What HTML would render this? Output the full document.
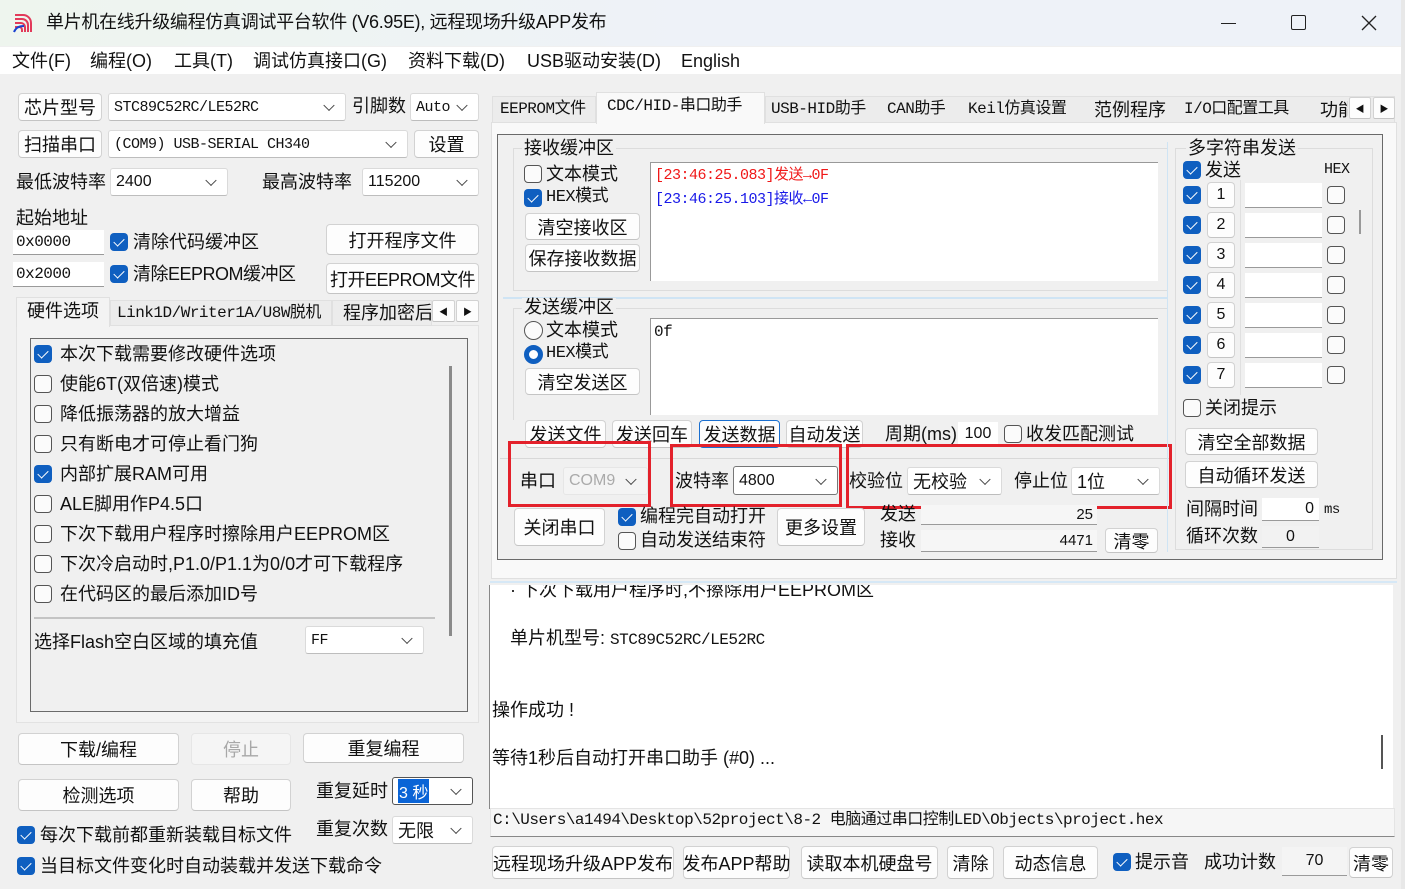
<!DOCTYPE html>
<html><head><meta charset="utf-8"><style>
*{box-sizing:border-box;margin:0;padding:0}
body{width:1405px;height:889px;overflow:hidden;background:#f0f0f0;position:relative;font-family:"Liberation Sans","Noto Sans CJK SC",sans-serif;font-size:18px;color:#111}
.a{position:absolute;white-space:nowrap}
.t{position:absolute;white-space:nowrap;line-height:1}
.b{position:absolute;background:#fdfdfd;border:1px solid #d2d2d2;border-bottom-color:#c4c4c4;border-radius:4px;display:flex;align-items:center;justify-content:center;white-space:nowrap;font-size:18px}
.cb{position:absolute;background:#fff;border:1px solid #dadada;border-bottom-color:#bdbdbd;border-radius:3px;display:flex;align-items:center;padding-left:5px;font-size:16px;white-space:nowrap}
.cb::after{content:"";position:absolute;right:12px;top:50%;width:7px;height:7px;border-right:1.3px solid #444;border-bottom:1.3px solid #444;transform:translateY(-70%) rotate(45deg)}
.m{font-family:"Liberation Mono","Noto Sans CJK SC",monospace;font-size:15px;letter-spacing:-0.5px}
.ck{position:absolute;width:18px;height:18px;border-radius:4px;background:#0f5fc0}
.ck::after{content:"";position:absolute;left:6px;top:3px;width:5px;height:9px;border-right:1.6px solid #fff;border-bottom:1.6px solid #fff;transform:rotate(45deg)}
.uc{position:absolute;width:18px;height:18px;border-radius:4px;border:1.5px solid #555;background:#fbfbfb}
.in{position:absolute;background:#fff;border-bottom:1px solid #9a9a9a;font-size:16px;display:flex;align-items:center}
.red{position:absolute;border:3px solid #e3212b}
</style></head><body>
<!-- title bar -->
<div class="a" style="left:0;top:0;width:1405px;height:46px;background:linear-gradient(90deg,#eef5ee,#eef2f8 50%,#eef2f8)"></div>
<svg class="a" style="left:13px;top:12px" width="24" height="22" viewBox="0 0 24 22">
<path d="M2 3h8a8 8 0 0 1 8 8v9M2 7h7a6 6 0 0 1 6 6v7M2 11h6a4 4 0 0 1 4 4v5M2 15h4a3 3 0 0 1 3 3v2" stroke="#e23a5a" stroke-width="2" fill="none"/>
<path d="M1 20c2-5 6-6 10-6" stroke="#1840d0" stroke-width="2" fill="none"/></svg>
<div class="t" style="left:46px;top:13px;font-size:18px;letter-spacing:-0.3px">单片机在线升级编程仿真调试平台软件 (V6.95E), 远程现场升级APP发布</div>
<div class="a" style="left:1221px;top:23px;width:15px;height:1px;background:#222"></div>
<div class="a" style="left:1291px;top:15px;width:15px;height:15px;border:1.3px solid #222;border-radius:2px"></div>
<svg class="a" style="left:1361px;top:15px" width="16" height="16"><path d="M1 1L15 15M15 1L1 15" stroke="#222" stroke-width="1.3"/></svg>
<!-- menu -->
<div class="a" style="left:0;top:47px;width:1405px;height:27px;background:#fff"></div>
<div class="t" style="left:12px;top:52px">文件(F)</div>
<div class="t" style="left:90px;top:52px">编程(O)</div>
<div class="t" style="left:174px;top:52px">工具(T)</div>
<div class="t" style="left:253px;top:52px">调试仿真接口(G)</div>
<div class="t" style="left:408px;top:52px">资料下载(D)</div>
<div class="t" style="left:527px;top:52px">USB驱动安装(D)</div>
<div class="t" style="left:681px;top:52px">English</div>

<!-- left top -->
<div class="b" style="left:18px;top:93px;width:84px;height:28px">芯片型号</div>
<div class="cb m" style="left:108px;top:93px;width:238px;height:28px">STC89C52RC/LE52RC</div>
<div class="t" style="left:352px;top:97px">引脚数</div>
<div class="cb m" style="left:410px;top:93px;width:69px;height:28px">Auto</div>
<div class="b" style="left:18px;top:130px;width:84px;height:28px">扫描串口</div>
<div class="cb m" style="left:108px;top:130px;width:300px;height:28px">(COM9) USB-SERIAL CH340</div>
<div class="b" style="left:414px;top:130px;width:65px;height:28px">设置</div>
<div class="t" style="left:16px;top:173px">最低波特率</div>
<div class="cb" style="left:110px;top:168px;width:118px;height:28px">2400</div>
<div class="t" style="left:262px;top:173px">最高波特率</div>
<div class="cb" style="left:362px;top:168px;width:117px;height:28px">115200</div>
<div class="t" style="left:16px;top:209px">起始地址</div>
<div class="in m" style="left:13px;top:230px;width:91px;height:25px;padding-left:3px">0x0000</div>
<div class="ck" style="left:110px;top:233px"></div><div class="t" style="left:133px;top:233px">清除代码缓冲区</div>
<div class="b" style="left:326px;top:224px;width:153px;height:31px">打开程序文件</div>
<div class="in m" style="left:13px;top:262px;width:91px;height:25px;padding-left:3px">0x2000</div>
<div class="ck" style="left:110px;top:265px"></div><div class="t" style="left:133px;top:265px;letter-spacing:-0.5px">清除EEPROM缓冲区</div>
<div class="b" style="left:326px;top:263px;width:153px;height:31px;letter-spacing:-0.5px">打开EEPROM文件</div>
<!-- left tabs -->
<div class="a" style="left:16px;top:325px;width:463px;height:398px;background:#f3f3f3;border:1px solid #e2e2e2"></div>
<div class="a" style="left:16px;top:297px;width:94px;height:30px;background:#f3f3f3;border:1px solid #e0e0e0;border-bottom:none"></div>
<div class="t" style="left:27px;top:302px">硬件选项</div>
<div class="a" style="left:110px;top:300px;width:222px;height:26px;background:#ececec;border:1px solid #e0e0e0"></div>
<div class="t m" style="left:117px;top:305px;font-size:16px">Link1D/Writer1A/U8W脱机</div>
<div class="a" style="left:332px;top:300px;width:100px;height:26px;background:#ececec;border:1px solid #e0e0e0;overflow:hidden"><span class="t" style="left:10px;top:3px">程序加密后</span></div>
<div class="b" style="left:432px;top:300px;width:23px;height:22px;font-size:9px;border-radius:2px">◀</div>
<div class="b" style="left:456px;top:300px;width:23px;height:22px;font-size:9px;border-radius:2px">▶</div>
<div class="a" style="left:30px;top:338px;width:438px;height:374px;border:1.5px solid #6a6a6a;background:#f0f0f0"></div>
<div class="ck" style="left:34px;top:345px"></div><div class="t" style="left:60px;top:345px">本次下载需要修改硬件选项</div>
<div class="uc" style="left:34px;top:375px"></div><div class="t" style="left:60px;top:375px">使能6T(双倍速)模式</div>
<div class="uc" style="left:34px;top:405px"></div><div class="t" style="left:60px;top:405px">降低振荡器的放大增益</div>
<div class="uc" style="left:34px;top:435px"></div><div class="t" style="left:60px;top:435px">只有断电才可停止看门狗</div>
<div class="ck" style="left:34px;top:465px"></div><div class="t" style="left:60px;top:465px">内部扩展RAM可用</div>
<div class="uc" style="left:34px;top:495px"></div><div class="t" style="left:60px;top:495px">ALE脚用作P4.5口</div>
<div class="uc" style="left:34px;top:525px"></div><div class="t" style="left:60px;top:525px">下次下载用户程序时擦除用户EEPROM区</div>
<div class="uc" style="left:34px;top:555px"></div><div class="t" style="left:60px;top:555px">下次冷启动时,P1.0/P1.1为0/0才可下载程序</div>
<div class="uc" style="left:34px;top:585px"></div><div class="t" style="left:60px;top:585px">在代码区的最后添加ID号</div>
<div class="a" style="left:34px;top:617px;width:401px;height:1.5px;background:#c4c4c4"></div>
<div class="t" style="left:34px;top:633px">选择Flash空白区域的填充值</div>
<div class="cb m" style="left:305px;top:626px;width:119px;height:28px">FF</div>
<div class="a" style="left:449px;top:366px;width:3px;height:270px;background:#8a8a8a"></div>
<!-- left bottom buttons -->
<div class="b" style="left:18px;top:733px;width:161px;height:32px">下载/编程</div>
<div class="b" style="left:191px;top:733px;width:100px;height:32px;color:#a8a8a8;background:#f5f5f5;border-color:#e6e6e6">停止</div>
<div class="b" style="left:303px;top:733px;width:161px;height:30px">重复编程</div>
<div class="b" style="left:18px;top:779px;width:161px;height:32px">检测选项</div>
<div class="b" style="left:191px;top:779px;width:100px;height:32px">帮助</div>
<div class="t" style="left:316px;top:782px">重复延时</div>
<div class="cb" style="left:392px;top:777px;width:81px;height:28px;border:1.5px solid #555"><span style="background:#0a64d6;color:#fff;padding:0 1px">3 秒</span></div>
<div class="t" style="left:316px;top:820px">重复次数</div>
<div class="cb" style="left:392px;top:816px;width:81px;height:28px;font-size:18px">无限</div>
<div class="ck" style="left:17px;top:826px"></div><div class="t" style="left:40px;top:826px">每次下载前都重新装载目标文件</div>
<div class="ck" style="left:17px;top:857px"></div><div class="t" style="left:40px;top:857px">当目标文件变化时自动装载并发送下载命令</div>

<!-- right tabs -->
<div class="a" style="left:491px;top:122px;width:906px;height:457px;background:#f9f9f9;border:1px solid #e0e0e0"></div>
<div class="a" style="left:492px;top:96px;width:104px;height:27px;background:#ececec;border:1px solid #e0e0e0"></div>
<div class="t m" style="left:500px;top:101px;font-size:16px">EEPROM文件</div>
<div class="a" style="left:596px;top:92px;width:169px;height:32px;background:#f9f9f9;border:1px solid #e0e0e0;border-bottom:none"></div>
<div class="t m" style="left:607px;top:98px;font-size:16px">CDC/HID-串口助手</div>
<div class="a" style="left:765px;top:96px;width:630px;height:27px;background:#ececec;border:1px solid #e0e0e0"></div>
<div class="t m" style="left:771px;top:101px;font-size:16px">USB-HID助手</div>
<div class="t m" style="left:887px;top:101px;font-size:16px">CAN助手</div>
<div class="t m" style="left:968px;top:101px;font-size:16px">Keil仿真设置</div>
<div class="t" style="left:1094px;top:101px">范例程序</div>
<div class="t m" style="left:1184px;top:101px;font-size:16px">I/O口配置工具</div>
<div class="t" style="left:1320px;top:101px;width:28px;overflow:hidden">功能</div>
<div class="b" style="left:1349px;top:97px;width:22px;height:22px;font-size:9px;border-radius:2px">◀</div>
<div class="b" style="left:1373px;top:97px;width:22px;height:22px;font-size:9px;border-radius:2px">▶</div>
<div class="a" style="left:497px;top:134px;width:886px;height:426px;border:1.5px solid #6a6a6a;background:#f0f0f0"></div>
<!-- receive group -->
<div class="a" style="left:513px;top:148px;width:655px;height:143px;border:1px solid #dcdcdc"></div>
<div class="t" style="left:522px;top:139px;background:#f0f0f0;padding:0 2px">接收缓冲区</div>
<div class="uc" style="left:524px;top:165px"></div><div class="t" style="left:546px;top:165px">文本模式</div>
<div class="ck" style="left:524px;top:189px"></div><div class="t m" style="left:546px;top:189px;font-size:17px">HEX模式</div>
<div class="b" style="left:525px;top:213px;width:115px;height:27px">清空接收区</div>
<div class="b" style="left:525px;top:244px;width:115px;height:28px">保存接收数据</div>
<div class="a" style="left:650px;top:162px;width:508px;height:119px;background:#fff;border-top:1.5px solid #999;border-left:1px solid #999"></div>
<div class="t m" style="left:655px;top:168px;color:#f01818">[23:46:25.083]发送→0F</div>
<div class="t m" style="left:655px;top:192px;color:#1818e8">[23:46:25.103]接收←0F</div>
<div class="a" style="left:503px;top:297px;width:664px;height:2px;background:#cfe4f4"></div>
<!-- send group -->
<div class="a" style="left:513px;top:308px;width:655px;height:112px;border:1px solid #dcdcdc;border-bottom:none"></div>
<div class="t" style="left:522px;top:298px;background:#f0f0f0;padding:0 2px">发送缓冲区</div>
<div class="a" style="left:524px;top:321px;width:19px;height:19px;border-radius:50%;border:1.5px solid #555;background:#fbfbfb"></div><div class="t" style="left:546px;top:321px">文本模式</div>
<div class="a" style="left:524px;top:345px;width:19px;height:19px;border-radius:50%;border:5px solid #0f5fc0;background:#fff"></div><div class="t m" style="left:546px;top:345px;font-size:17px">HEX模式</div>
<div class="b" style="left:525px;top:368px;width:115px;height:27px">清空发送区</div>
<div class="a" style="left:650px;top:318px;width:508px;height:97px;background:#fff;border-top:1.5px solid #999;border-left:1px solid #999"></div>
<div class="t m" style="left:654px;top:324px;font-size:16px">0f</div>
<div class="b" style="left:525px;top:420px;width:81px;height:28px">发送文件</div>
<div class="b" style="left:612px;top:420px;width:80px;height:28px">发送回车</div>
<div class="b" style="left:699px;top:420px;width:81px;height:28px;border:1.5px solid #1a6fd0">发送数据</div>
<div class="b" style="left:786px;top:420px;width:77px;height:28px">自动发送</div>
<div class="t" style="left:885px;top:425px">周期(ms)</div>
<div class="in" style="left:958px;top:422px;width:40px;height:24px;justify-content:center">100</div>
<div class="uc" style="left:1004px;top:425px"></div><div class="t" style="left:1026px;top:425px">收发匹配测试</div>
<!-- serial row -->
<div class="a" style="left:500px;top:458px;width:670px;height:1px;background:#d8d8d8"></div>
<div class="t" style="left:520px;top:472px">串口</div>
<div class="cb" style="left:563px;top:467px;width:85px;height:28px;color:#aaa;background:#f4f4f4;border-color:#e6e6e6">COM9</div>
<div class="t" style="left:675px;top:472px">波特率</div>
<div class="cb" style="left:733px;top:466px;width:105px;height:29px;border:1.3px solid #777">4800</div>
<div class="t" style="left:849px;top:472px">校验位</div>
<div class="cb" style="left:907px;top:467px;width:95px;height:28px;font-size:18px">无校验</div>
<div class="t" style="left:1014px;top:472px">停止位</div>
<div class="cb" style="left:1071px;top:467px;width:89px;height:28px;font-size:18px">1位</div>
<div class="red" style="left:508px;top:441px;width:143px;height:66px"></div>
<div class="red" style="left:670px;top:444px;width:172px;height:63px"></div>
<div class="red" style="left:846px;top:444px;width:326px;height:65px"></div>
<div class="b" style="left:514px;top:508px;width:91px;height:38px">关闭串口</div>
<div class="ck" style="left:618px;top:508px"></div><div class="t" style="left:640px;top:507px">编程完自动打开</div>
<div class="uc" style="left:618px;top:532px"></div><div class="t" style="left:640px;top:531px">自动发送结束符</div>
<div class="b" style="left:777px;top:508px;width:88px;height:38px">更多设置</div>
<div class="t" style="left:880px;top:505px">发送</div>
<div class="in" style="left:921px;top:505px;width:176px;height:20px;justify-content:flex-end;padding-right:4px;background:#f6f6f6;font-size:15px">25</div>
<div class="t" style="left:880px;top:531px">接收</div>
<div class="in" style="left:921px;top:530px;width:176px;height:22px;justify-content:flex-end;padding-right:4px;background:#f6f6f6;font-size:15px">4471</div>
<div class="b" style="left:1105px;top:528px;width:53px;height:25px">清零</div>
<!-- multi-string -->
<div class="a" style="left:1175px;top:148px;width:198px;height:402px;border:1px solid #dcdcdc"></div>
<div class="a" style="left:1167px;top:142px;width:1px;height:410px;background:#cfe4f4"></div>
<div class="t" style="left:1186px;top:139px;background:#f0f0f0;padding:0 2px">多字符串发送</div>
<div class="ck" style="left:1183px;top:161px"></div><div class="t" style="left:1205px;top:161px">发送</div>
<div class="t m" style="left:1324px;top:162px;font-size:15px">HEX</div>
<div class="a" style="left:1240px;top:180px;width:1px;height:215px;background:#e0e0e0"></div>
<div class="a" style="left:1359px;top:210px;width:2px;height:24px;background:#999"></div>

<div class="ck" style="left:1183px;top:186px"></div><div class="b" style="left:1207px;top:182px;width:28px;height:26px;font-size:16px">1</div><div class="in" style="left:1245px;top:183px;width:77px;height:25px"></div><div class="uc" style="left:1327px;top:186px"></div>
<div class="ck" style="left:1183px;top:216px"></div><div class="b" style="left:1207px;top:212px;width:28px;height:26px;font-size:16px">2</div><div class="in" style="left:1245px;top:213px;width:77px;height:25px"></div><div class="uc" style="left:1327px;top:216px"></div>
<div class="ck" style="left:1183px;top:246px"></div><div class="b" style="left:1207px;top:242px;width:28px;height:26px;font-size:16px">3</div><div class="in" style="left:1245px;top:243px;width:77px;height:25px"></div><div class="uc" style="left:1327px;top:246px"></div>
<div class="ck" style="left:1183px;top:276px"></div><div class="b" style="left:1207px;top:272px;width:28px;height:26px;font-size:16px">4</div><div class="in" style="left:1245px;top:273px;width:77px;height:25px"></div><div class="uc" style="left:1327px;top:276px"></div>
<div class="ck" style="left:1183px;top:306px"></div><div class="b" style="left:1207px;top:302px;width:28px;height:26px;font-size:16px">5</div><div class="in" style="left:1245px;top:303px;width:77px;height:25px"></div><div class="uc" style="left:1327px;top:306px"></div>
<div class="ck" style="left:1183px;top:336px"></div><div class="b" style="left:1207px;top:332px;width:28px;height:26px;font-size:16px">6</div><div class="in" style="left:1245px;top:333px;width:77px;height:25px"></div><div class="uc" style="left:1327px;top:336px"></div>
<div class="ck" style="left:1183px;top:366px"></div><div class="b" style="left:1207px;top:362px;width:28px;height:26px;font-size:16px">7</div><div class="in" style="left:1245px;top:363px;width:77px;height:25px"></div><div class="uc" style="left:1327px;top:366px"></div>
<div class="uc" style="left:1183px;top:399px"></div><div class="t" style="left:1205px;top:399px">关闭提示</div>
<div class="b" style="left:1185px;top:428px;width:133px;height:27px">清空全部数据</div>
<div class="b" style="left:1185px;top:461px;width:133px;height:27px">自动循环发送</div>
<div class="t" style="left:1186px;top:500px">间隔时间</div>
<div class="in" style="left:1262px;top:498px;width:57px;height:23px;justify-content:flex-end;padding-right:5px">0</div>
<div class="t m" style="left:1324px;top:503px;font-size:14px">ms</div>
<div class="t" style="left:1186px;top:527px">循环次数</div>
<div class="in" style="left:1262px;top:526px;width:57px;height:22px;justify-content:center;background:#f2f2f2">0</div>

<!-- log -->
<div class="a" style="left:490px;top:581px;width:907px;height:2px;background:#d6e8f6"></div>
<div class="a" style="left:489px;top:585px;width:904px;height:224px;background:#fff;border-left:1px solid #888;overflow:hidden">
<div class="t" style="left:20px;top:-4px">·&nbsp;下次下载用户程序时,不擦除用户EEPROM区</div>
<div class="t" style="left:20px;top:44px">单片机型号: <span class="m" style="font-size:16px">STC89C52RC/LE52RC</span></div>
<div class="t" style="left:2px;top:116px">操作成功 !</div>
<div class="t" style="left:2px;top:164px">等待1秒后自动打开串口助手 (#0) ...</div>
<div class="a" style="left:891px;top:150px;width:2px;height:34px;background:#555"></div>
</div>
<div class="a" style="left:490px;top:808px;width:905px;height:29px;background:#f6f6f6;border:1px solid #e4e4e4;border-bottom:1.5px solid #888"></div>
<div class="t m" style="left:493px;top:812px;font-size:16px">C:\Users\a1494\Desktop\52project\8-2 电脑通过串口控制LED\Objects\project.hex</div>
<div class="b" style="left:492px;top:846px;width:182px;height:33px">远程现场升级APP发布</div>
<div class="b" style="left:683px;top:846px;width:107px;height:33px">发布APP帮助</div>
<div class="b" style="left:801px;top:846px;width:137px;height:33px">读取本机硬盘号</div>
<div class="b" style="left:947px;top:846px;width:47px;height:33px">清除</div>
<div class="b" style="left:1003px;top:846px;width:95px;height:33px">动态信息</div>
<div class="ck" style="left:1113px;top:853px"></div><div class="t" style="left:1135px;top:853px">提示音</div>
<div class="t" style="left:1204px;top:853px">成功计数</div>
<div class="in" style="left:1282px;top:847px;width:65px;height:29px;justify-content:center;background:#f4f4f4">70</div>
<div class="b" style="left:1349px;top:847px;width:44px;height:31px">清零</div>
<div class="a" style="left:1401px;top:0;width:4px;height:889px;background:#e8e8e8"></div>
</body></html>
